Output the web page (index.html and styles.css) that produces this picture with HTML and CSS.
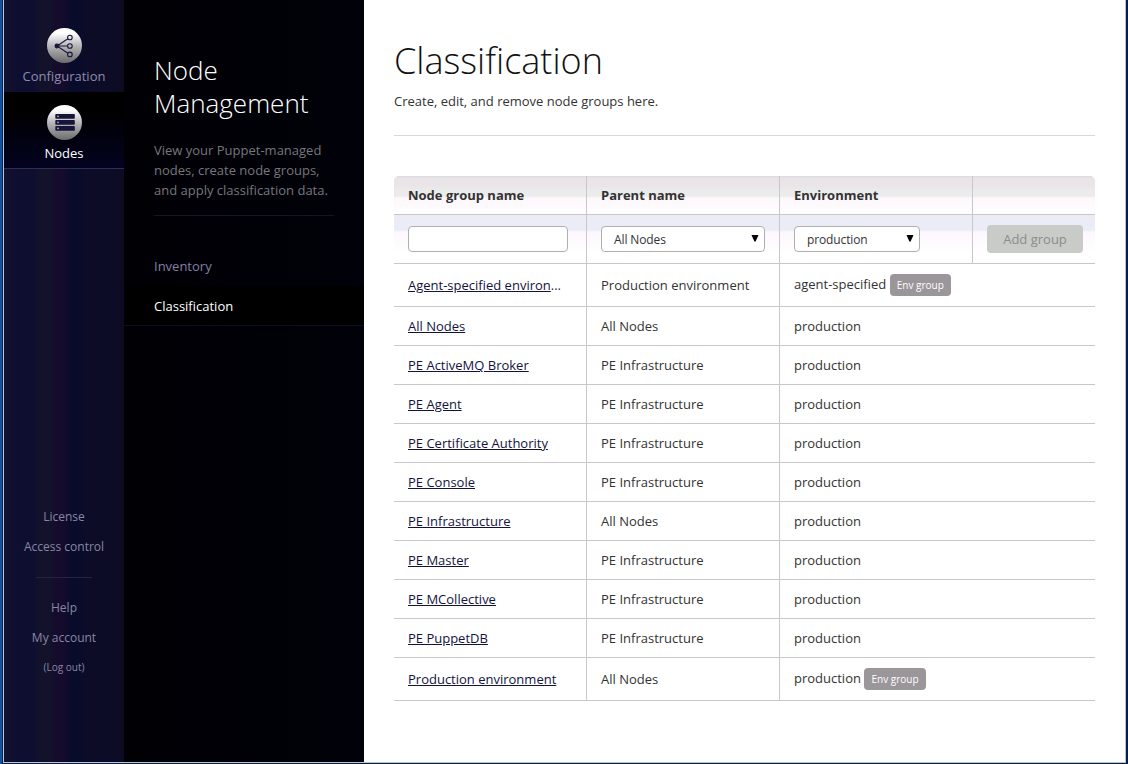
FILE: index.html
```html
<!DOCTYPE html>
<html lang="en">
<head>
<meta charset="utf-8">
<title>Classification</title>
<link rel="stylesheet" href="styles.css">
</head>
<body>
<div class="window">
  <nav class="rail">
    <a class="rail-item">
      <svg class="rail-icon" width="36" height="36" viewBox="0 0 36 36">
        <defs><linearGradient id="g1" x1="0" y1="0" x2="0" y2="1"><stop offset="0.15" stop-color="#fff"/><stop offset="0.5" stop-color="#b8b8bc"/><stop offset="1" stop-color="#6c6c6c"/></linearGradient></defs>
        <circle cx="17.5" cy="17.5" r="17.5" fill="url(#g1)"/>
        <g stroke="#1c1838" stroke-width="1.1" fill="none">
          <path d="M10 18L20.9 10.7M10 18H20.2M10 18L20.9 25.2"/>
          <circle cx="22.9" cy="9.5" r="2.3"/><circle cx="22.9" cy="18" r="2.3"/><circle cx="22.9" cy="26.4" r="2.3"/>
        </g>
        <circle cx="9.9" cy="18" r="2.4" fill="#1c1838"/>
      </svg>
      <span>Configuration</span>
    </a>
    <a class="rail-item active">
      <svg class="rail-icon" width="36" height="36" viewBox="0 0 36 36">
        <circle cx="17.5" cy="17.5" r="17.5" fill="url(#g1)"/>
        <g fill="#17143a"><rect x="8.3" y="9" width="19.5" height="4.8" rx=".7"/><rect x="8.3" y="15" width="19.5" height="4.8" rx=".7"/><rect x="8.3" y="21" width="19.5" height="4.8" rx=".7"/></g>
        <g fill="#bbb"><circle cx="11" cy="11.4" r=".8"/><circle cx="11" cy="17.4" r=".8"/><circle cx="11" cy="23.4" r=".8"/></g>
      </svg>
      <span>Nodes</span>
    </a>
    <div class="rail-links">
      <a>License</a>
      <a>Access control</a>
      <hr class="rail-rule">
      <a>Help</a>
      <a>My account</a>
      <a class="small">(Log out)</a>
    </div>
  </nav>
  <aside class="sub">
    <header class="sub-head">
      <h2>Node<br>Management</h2>
      <p>View your Puppet-managed<br>nodes, create node groups,<br>and apply classification data.</p>
    </header>
    <a class="sub-link">Inventory</a>
    <a class="sub-link current">Classification</a>
  </aside>
  <main class="main">
    <h1>Classification</h1>
    <p class="lead">Create, edit, and remove node groups here.</p>
    <table class="groups">
      <colgroup><col class="c1"><col class="c2"><col class="c3"><col class="c4"></colgroup>
      <thead>
        <tr class="head"><th>Node group name</th><th>Parent name</th><th>Environment</th><th></th></tr>
        <tr class="form">
          <td><input class="field" type="text"></td>
          <td><div class="select wide"><span>All Nodes</span><svg width="8" height="7"><path d="M.5 0H7.5L4.6 6.5H3.4Z"/></svg></div></td>
          <td><div class="select narrow"><span>production</span><svg width="8" height="7"><path d="M.5 0H7.5L4.6 6.5H3.4Z"/></svg></div></td>
          <td><button class="add">Add group</button></td>
        </tr>
      </thead>
      <tbody>
        <tr class="tall"><td><a>Agent-specified environ</a>...</td><td>Production environment</td><td colspan="2"><div class="env">agent-specified<b class="tag">Env group</b></div></td></tr>
        <tr><td><a>All Nodes</a></td><td>All Nodes</td><td colspan="2">production</td></tr>
        <tr><td><a>PE ActiveMQ Broker</a></td><td>PE Infrastructure</td><td colspan="2">production</td></tr>
        <tr><td><a>PE Agent</a></td><td>PE Infrastructure</td><td colspan="2">production</td></tr>
        <tr><td><a>PE Certificate Authority</a></td><td>PE Infrastructure</td><td colspan="2">production</td></tr>
        <tr><td><a>PE Console</a></td><td>PE Infrastructure</td><td colspan="2">production</td></tr>
        <tr><td><a>PE Infrastructure</a></td><td>All Nodes</td><td colspan="2">production</td></tr>
        <tr><td><a>PE Master</a></td><td>PE Infrastructure</td><td colspan="2">production</td></tr>
        <tr><td><a>PE MCollective</a></td><td>PE Infrastructure</td><td colspan="2">production</td></tr>
        <tr><td><a>PE PuppetDB</a></td><td>PE Infrastructure</td><td colspan="2">production</td></tr>
        <tr class="tall"><td><a>Production environment</a></td><td>All Nodes</td><td colspan="2"><div class="env">production<b class="tag">Env group</b></div></td></tr>
      </tbody>
    </table>
  </main>
</div>
</body>
</html>
```
FILE: styles.css
```css
* { box-sizing: border-box; }
body {
  margin: 0;
  height: 764px;
  overflow: hidden;
  padding: 0 2px 1px 3px;
  background: linear-gradient(90deg, #17519b 0 2px, #00265a 2px 3px, #001f52 3px);
  font: 13px/20px "Open Sans", sans-serif;
  color: #333;
}
h1, h2, p { margin: 0; font-weight: 400; }
.window {
  display: flex;
  height: 763px;
  border: 1px solid #c3c3c3;
  border-top: 0;
  border-left-color: #c0c4d4;
  background: #fff;
}
.rail {
  width: 120px;
  display: flex;
  flex-direction: column;
  background: linear-gradient(90deg, #11132f 0, #0e0e31 14px, #0e0e31 30px, #12122b 36px, #12122b 46px, #150b2c 52px, #150b2c 60px, #080c2a 66px, #080c2a 74px, #0c0c27 84px, #0c0c26 108px, #0e0b21 120px);
}
.rail-item {
  height: 92px;
  padding-top: 28px;
  display: flex;
  flex-direction: column;
  align-items: center;
  color: #8d8caa;
}
.rail-icon { margin-bottom: 2px; margin-left: 2px; }
.rail-item.active {
  height: 77px;
  padding-top: 13px;
  color: #fff;
  background: linear-gradient(#000 25%, #030321);
  border-bottom: 1px solid #302f50;
}
.rail-links {
  margin-top: 338px;
  display: flex;
  flex-direction: column;
  align-items: center;
  gap: 10px;
  font-size: 12px;
  color: #8886a5;
}
.rail-rule { width: 56px; height: 1px; margin: 10px 0; border: 0; background: #24243f; }
.rail-links .small { font-size: 10px; line-height: 18px; }
.sub { width: 240px; padding-top: 54px; background: linear-gradient(90deg, #000005, #010109); }
.sub-head {
  margin: 0 30px 30px;
  padding-bottom: 15px;
  border-bottom: 1px solid #151528;
  color: #77777b;
}
.sub h2 { font-size: 26px; line-height: 33px; font-weight: 300; color: #fff; margin-bottom: 20px; white-space: nowrap; }
.sub-head p { white-space: nowrap; }
.sub-link { display: block; height: 40px; padding: 10px 30px; color: #8280a4; }
.sub-link.current { background: #000; color: #fff; border-bottom: 1px solid #0e0e20; }
.main { width: 761px; padding: 36px 30px 0; }
h1 { font-size: 36px; line-height: 50px; font-weight: 300; color: #111; }
.lead { padding: 5px 0 24px; border-bottom: 1px solid #d8d8d8; }
.groups {
  margin-top: 40px;
  width: 701px;
  table-layout: fixed;
  border-collapse: separate;
  border-spacing: 0;
  border-radius: 5px 5px 0 0;
  overflow: hidden;
}
.c1, .c2, .c3 { width: 193px; }
.c4 { width: 122px; }
.groups th, .groups td {
  height: 39px;
  padding: 0 14px;
  text-align: left;
  vertical-align: middle;
  white-space: nowrap;
  border-right: 1px solid #c8c8c8;
  border-bottom: 1px solid #c8c8c8;
}
.groups th:last-child, .groups td:last-child { border-right: 0; }
.head th {
  background: linear-gradient(#dadada 0, #e8e4e8 2px, #e9e5e8 10px, #eaeaea 13px, #ececec 20px, #fcf8fc 22px, #fdf9fd 28px, #fff 38px);
  font-weight: 700;
}
.groups .form td { height: 49px; background: linear-gradient(#ececf7 0 15px, #fcf7fd 17px, #fefafe 27px, #fff 36px); }
.groups .tall td { height: 43px; }
.groups a { color: #13133b; text-decoration: underline; }
.field, .select {
  display: flex;
  width: 160px;
  height: 26px;
  border: 1px solid #afafaf;
  border-radius: 4px;
  background: #fff;
}
.select { align-items: center; justify-content: space-between; padding: 1px 5px 0 12px; font-size: 12px; letter-spacing: -0.12px; }
.select svg { margin-top: -2px; }
.wide { width: 164px; }
.narrow { width: 126px; }
.add {
  display: block;
  width: 96px;
  height: 28px;
  padding: 0;
  border: 0;
  border-radius: 4px;
  background: #c9cbc9;
  color: #8c8c8c;
  font: 13px "Open Sans", sans-serif;
}
.env { display: flex; gap: 3.5px; line-height: 20px; }
.tag {
  height: 22px;
  padding: 0 7px;
  border-radius: 4px;
  background: #9b969a;
  color: #fff;
  font-size: 10px;
  line-height: 23px;
  font-weight: 500;
}
```
